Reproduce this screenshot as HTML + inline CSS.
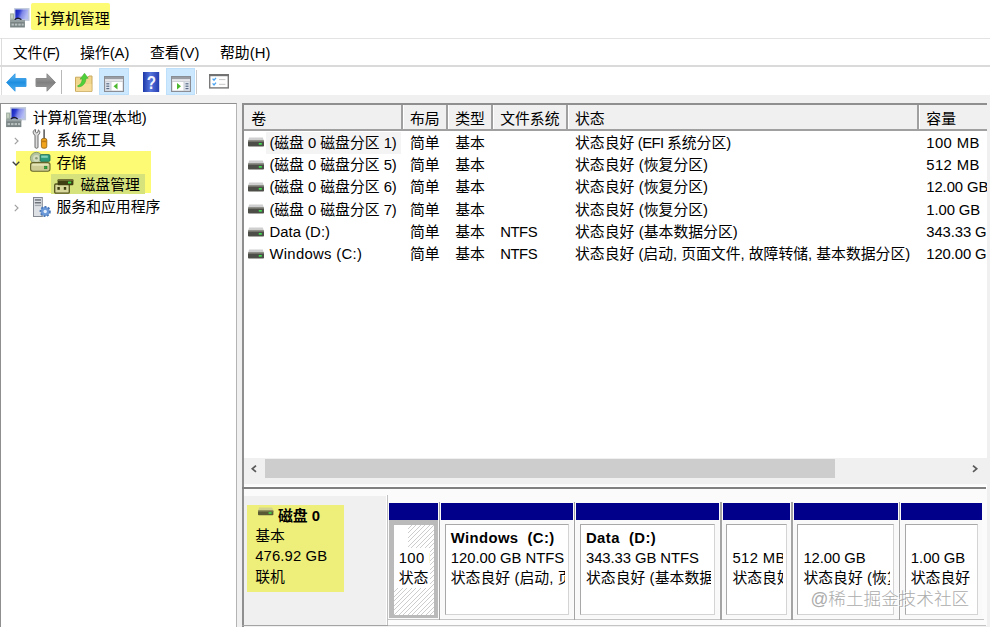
<!DOCTYPE html>
<html lang="zh-CN">
<head>
<meta charset="utf-8">
<title>计算机管理</title>
<style>
html,body{margin:0;padding:0;}
body{width:990px;height:627px;overflow:hidden;background:#fff;position:relative;
 font-family:"Liberation Sans","Noto Sans CJK SC",sans-serif;font-size:14.85px;color:#000;}
.a{position:absolute;white-space:nowrap;}
.t{position:absolute;white-space:nowrap;line-height:22px;height:22px;}
.l{font-size:14px;letter-spacing:-0.2px;}
.hl{background:#fcfb73;}
svg{position:absolute;overflow:visible;}
.clip{position:absolute;overflow:hidden;}
</style>
</head>
<body>
<div class="a hl" style="left:31px;top:3px;width:79px;height:27px;border-radius:2px;"></div>
<div class="t" id="title" style="left:35.3px;top:8.0px;">计算机管理</div>
<svg style="left:10px;top:8px" width="19.6" height="19.6" viewBox="0 0 19.6 19.6"><defs><linearGradient id="gs1" x1="0" y1="0" x2="1" y2="0.3"><stop offset="0" stop-color="#1420b8"/><stop offset="0.35" stop-color="#2c3cd0"/><stop offset="0.6" stop-color="#8088e8"/><stop offset="1" stop-color="#b4bcf4"/></linearGradient></defs><rect x="0.1" y="5.4" width="5" height="8" fill="#a2b0a4"/><rect x="1" y="6.5" width="2" height="4" fill="#c4d0c0"/><rect x="4.1" y="0.1" width="15.4" height="12.8" fill="#bec8da"/><rect x="5.4" y="1.6" width="12.6" height="9.6" fill="url(#gs1)"/><path d="M4.6 11.8 Q 8 8.6 11.4 11.8" fill="none" stroke="#1c1c24" stroke-width="1.3"/><rect x="0.1" y="12.3" width="14.8" height="7.2" fill="#7a8484"/><rect x="0.1" y="12.3" width="14.8" height="1.6" fill="#9aa4a4"/><rect x="1.5" y="15.6" width="2.4" height="2" fill="#b8c0c0"/><rect x="4.9" y="15.6" width="2.4" height="2" fill="#b8c0c0"/><rect x="8.3" y="15.6" width="2.4" height="2" fill="#b8c0c0"/><rect x="11.7" y="15.6" width="2" height="2" fill="#b8c0c0"/></svg>
<div class="a" style="left:0;top:38px;width:990px;height:1px;background:#e3e3e3;"></div>
<div class="a" style="left:0.5px;top:38px;width:1px;height:65px;background:#dcdcdc;"></div>
<div class="t" id="m1" style="left:12.7px;top:41.9px;">文件<span style="letter-spacing:-0.69px">(F)</span></div>
<div class="t" id="m2" style="left:80px;top:41.9px;">操作<span style="letter-spacing:-0.06px">(A)</span></div>
<div class="t" id="m3" style="left:150px;top:41.9px;">查看<span style="letter-spacing:-0.06px">(V)</span></div>
<div class="t" id="m4" style="left:220px;top:41.9px;">帮助<span style="letter-spacing:0.13px">(H)</span></div>
<div class="a" style="left:0;top:65.2px;width:990px;height:1.7px;background:#dadada;"></div>
<div class="a" style="left:0;top:94.7px;width:990px;height:8.3px;background:#f0f0f0;"></div>
<div class="a" style="left:99px;top:68.2px;width:29.6px;height:26.4px;background:#cce8ff;box-sizing:border-box;border:1px solid #bfe0fb;"></div>
<div class="a" style="left:166.2px;top:68.2px;width:28.8px;height:26.4px;background:#cce8ff;box-sizing:border-box;border:1px solid #bfe0fb;"></div>
<div class="a" style="left:61px;top:70px;width:1px;height:24px;background:#b8b8b8;"></div>
<div class="a" style="left:196px;top:70px;width:1px;height:24px;background:#c8c8c8;"></div>
<svg style="left:6px;top:73px" width="21" height="19" viewBox="0 0 21 19">
 <defs><linearGradient id="gb" x1="0" y1="0" x2="0" y2="1"><stop offset="0" stop-color="#5fb8f5"/><stop offset="0.5" stop-color="#1f8fe0"/><stop offset="1" stop-color="#4fb0f0"/></linearGradient></defs>
 <path d="M0.5 9.5 L9 0.8 L9 5.5 L20 5.5 L20 13.5 L9 13.5 L9 18.2 Z" fill="url(#gb)" stroke="#3d9fe6" stroke-width="1" stroke-linejoin="round"/>
</svg>
<svg style="left:35px;top:73px" width="21" height="19" viewBox="0 0 21 19">
 <defs><linearGradient id="gg" x1="0" y1="0" x2="0" y2="1"><stop offset="0" stop-color="#a8a8a8"/><stop offset="0.5" stop-color="#808080"/><stop offset="1" stop-color="#a0a0a0"/></linearGradient></defs>
 <path d="M20.5 9.5 L12 0.8 L12 5.5 L1 5.5 L1 13.5 L12 13.5 L12 18.2 Z" fill="url(#gg)" stroke="#8c8c8c" stroke-width="1" stroke-linejoin="round"/>
</svg>
<svg style="left:75px;top:72px" width="18" height="20" viewBox="0 0 18 20">
 <path d="M0.5 5.2 L13 5.2 L14 4 L17 4 L17 19.3 L0.5 19.3 Z" fill="#f0d68c" stroke="#caa95c" stroke-width="1"/>
 <rect x="1" y="12" width="15.5" height="7" fill="#f6dc98"/>
 <path d="M2.5 13.8 C5.5 13 7 10.5 7.2 6.8 L5 7.2 L9.5 1.2 L13.2 6.2 L11 6.4 C10.8 11.5 7.5 15 3 14.8 Z" fill="#4fd03a" stroke="#3aa82c" stroke-width="0.5"/>
</svg>
<svg style="left:104px;top:75.5px" width="20" height="16" viewBox="0 0 20 16"><rect x="0.5" y="0.5" width="19" height="15" fill="#c9ccd2" stroke="#8a8d94" stroke-width="1"/><rect x="1" y="1" width="18" height="2.2" fill="#9a9da4"/><rect x="1" y="3.2" width="18" height="2" fill="#e4e6ea"/><rect x="1.5" y="6" width="5" height="8.5" fill="#dfe6ef"/><rect x="2.3" y="7.2" width="3" height="1.2" fill="#5b6b86"/><rect x="2.3" y="9.6" width="3" height="1.2" fill="#5b6b86"/><rect x="2.3" y="12" width="3" height="1.2" fill="#5b6b86"/><rect x="7.5" y="6" width="11" height="8.5" fill="#fff"/><path d="M13.5 7 L13.5 13.5 L9.5 10.2 Z" fill="#4cb830"/></svg>
<svg style="left:171px;top:75.5px" width="20" height="16" viewBox="0 0 20 16"><rect x="0.5" y="0.5" width="19" height="15" fill="#c9ccd2" stroke="#8a8d94" stroke-width="1"/><rect x="1" y="1" width="18" height="2.2" fill="#9a9da4"/><rect x="1" y="3.2" width="18" height="2" fill="#e4e6ea"/><rect x="13.5" y="6" width="5" height="8.5" fill="#dfe6ef"/><rect x="14.5" y="7.2" width="3" height="1.2" fill="#5b6b86"/><rect x="14.5" y="9.6" width="3" height="1.2" fill="#5b6b86"/><rect x="14.5" y="12" width="3" height="1.2" fill="#5b6b86"/><rect x="1.5" y="6" width="11" height="8.5" fill="#fff"/><path d="M6 7 L6 13.5 L10 10.2 Z" fill="#4cb830"/></svg>
<svg style="left:142.6px;top:71.8px" width="16.2" height="20" viewBox="0 0 16.2 20">
 <defs><linearGradient id="gh" x1="0" y1="0" x2="1" y2="0"><stop offset="0" stop-color="#1c38a8"/><stop offset="0.45" stop-color="#5674dc"/><stop offset="1" stop-color="#243cb0"/></linearGradient></defs>
 <rect x="0" y="0" width="16.2" height="20" fill="url(#gh)"/>
 <text x="0" y="0" transform="translate(8.3 16.6) scale(0.82 1)" font-family="Liberation Sans, sans-serif" font-weight="bold" font-size="18.5" fill="#f4f4ff" text-anchor="middle">?</text>
</svg>
<svg style="left:208.8px;top:74.2px" width="20" height="14.6" viewBox="0 0 20 14.6">
 <rect x="0.7" y="0.7" width="18.6" height="13.2" fill="#fff" stroke="#7a7a7a" stroke-width="1.4"/>
 <rect x="0" y="0" width="20" height="2.2" fill="#727272"/>
 <path d="M3.6 4.6 L5 6.2 L7 3.8" fill="none" stroke="#4aa4f0" stroke-width="1.3"/>
 <path d="M3.6 9.4 L5 11 L7 8.6" fill="none" stroke="#4aa4f0" stroke-width="1.3"/>
 <rect x="10" y="5" width="6.4" height="1.1" fill="#cccccc"/>
 <rect x="10" y="9.8" width="6.4" height="1.1" fill="#cccccc"/>
</svg>
<div class="a" style="left:0.4px;top:103px;width:236.6px;height:524px;background:#fff;border:1px solid #8f8f8f;border-right-color:#b4b4b4;border-bottom:none;box-sizing:border-box;"></div>
<div class="a" style="left:237px;top:100px;width:5px;height:527px;background:#f0f0f0;"></div>
<div class="a hl" style="left:16px;top:151px;width:135px;height:41.6px;"></div>
<div class="a" style="left:51px;top:173.5px;width:94px;height:20.5px;background:#d6e27c;"></div>
<div class="t" id="tr0" style="left:32.8px;top:106.5px;">计算机管理<span style="letter-spacing:0.09px">(</span>本地<span style="letter-spacing:0.09px">)</span></div>
<div class="t" id="tr1" style="left:56.5px;top:129.0px;">系统工具</div>
<div class="t" id="tr2" style="left:56.5px;top:151.6px;">存储</div>
<div class="t" id="tr3" style="left:80.5px;top:173.8px;">磁盘管理</div>
<div class="t" id="tr4" style="left:56.5px;top:196.2px;">服务和应用程序</div>
<svg style="left:14.399999999999999px;top:136.6px" width="5" height="8" viewBox="0 0 5 8"><path d="M0.8 0.8 L4 4 L0.8 7.2" fill="none" stroke="#a0a0a0" stroke-width="1.2"/></svg>
<svg style="left:12.399999999999999px;top:161.20000000000002px" width="8" height="5" viewBox="0 0 8 5"><path d="M0.7 0.8 L4 4 L7.3 0.8" fill="none" stroke="#404040" stroke-width="1.3"/></svg>
<svg style="left:14.399999999999999px;top:203.8px" width="5" height="8" viewBox="0 0 5 8"><path d="M0.8 0.8 L4 4 L0.8 7.2" fill="none" stroke="#a0a0a0" stroke-width="1.2"/></svg>
<svg style="left:5.8px;top:106.8px" width="20.2" height="20.2" viewBox="0 0 19.6 19.6"><defs><linearGradient id="gs2" x1="0" y1="0" x2="1" y2="0.3"><stop offset="0" stop-color="#1420b8"/><stop offset="0.35" stop-color="#2c3cd0"/><stop offset="0.6" stop-color="#8088e8"/><stop offset="1" stop-color="#b4bcf4"/></linearGradient></defs><rect x="0.1" y="5.4" width="5" height="8" fill="#a2b0a4"/><rect x="1" y="6.5" width="2" height="4" fill="#c4d0c0"/><rect x="4.1" y="0.1" width="15.4" height="12.8" fill="#bec8da"/><rect x="5.4" y="1.6" width="12.6" height="9.6" fill="url(#gs2)"/><path d="M4.6 11.8 Q 8 8.6 11.4 11.8" fill="none" stroke="#1c1c24" stroke-width="1.3"/><rect x="0.1" y="12.3" width="14.8" height="7.2" fill="#7a8484"/><rect x="0.1" y="12.3" width="14.8" height="1.6" fill="#9aa4a4"/><rect x="1.5" y="15.6" width="2.4" height="2" fill="#b8c0c0"/><rect x="4.9" y="15.6" width="2.4" height="2" fill="#b8c0c0"/><rect x="8.3" y="15.6" width="2.4" height="2" fill="#b8c0c0"/><rect x="11.7" y="15.6" width="2" height="2" fill="#b8c0c0"/></svg>
<svg style="left:32px;top:128.6px" width="16" height="20" viewBox="0 0 16 20">
 <path d="M1.2 3.4 C1 1.8 2.2 0.7 3.6 0.6 L3.4 3 L4.6 3.8 L6 3 L6.4 0.9 C7.8 1.6 8.2 3.4 7.4 4.8 C7 5.6 6.4 6 6 6.2 L6 18.2 C6 19.6 3 19.6 3 18.2 L3 6.2 C2 5.8 1.3 4.8 1.2 3.4 Z" fill="#dcdcdc" stroke="#5c5c5c" stroke-width="0.9"/>
 <rect x="11.4" y="0.4" width="1.4" height="9.4" fill="#4a4a4a"/>
 <rect x="9.4" y="9.4" width="5.4" height="9.8" rx="1.8" fill="#f2a41c" stroke="#8c5c0c" stroke-width="0.8"/>
 <rect x="9.2" y="11.6" width="5.8" height="1.6" fill="#c07c10"/>
</svg>
<svg style="left:30px;top:152px" width="21" height="20" viewBox="0 0 21 20">
 <circle cx="6.4" cy="6.3" r="6" fill="#b4c49c" stroke="#7c8c64" stroke-width="0.8"/>
 <circle cx="6.4" cy="6.3" r="3.4" fill="#d4dcc0"/>
 <circle cx="6.4" cy="6.3" r="1.3" fill="#8c9c78"/>
 <rect x="10.2" y="2.6" width="9.8" height="6.8" rx="1.2" fill="#2c9c7c" stroke="#1c6c54" stroke-width="0.8"/>
 <rect x="11.2" y="3.6" width="6.6" height="2.2" fill="#84d0b8"/>
 <rect x="0.6" y="10.6" width="19.4" height="8.6" rx="2.2" fill="#cccc94" stroke="#66662c" stroke-width="1.1"/>
 <rect x="2" y="11.8" width="16.6" height="2" rx="1" fill="#e4e4b8"/>
 <rect x="14.6" y="14.2" width="2.4" height="2.6" fill="#2cb03c" stroke="#1c6c24" stroke-width="0.5"/>
</svg>
<svg style="left:54px;top:179px" width="20" height="15" viewBox="0 0 20 15">
 <rect x="0.7" y="5" width="14.6" height="9.2" rx="1.2" fill="#d8d89c" stroke="#54541c" stroke-width="1.3"/>
 <rect x="3.4" y="8" width="2.4" height="2.8" fill="#3c3c10"/>
 <rect x="9.8" y="8" width="2.4" height="2.8" fill="#3c3c10"/>
 <rect x="3.6" y="0.2" width="15.8" height="6" rx="1" fill="#3e3e12"/>
 <rect x="3.6" y="0.2" width="15.8" height="1.6" rx="0.8" fill="#78783c"/>
 <rect x="14" y="2.6" width="3.2" height="1.9" fill="#44d84c"/>
</svg>
<svg style="left:32.5px;top:197px" width="19" height="20" viewBox="0 0 19 20">
 <rect x="0.5" y="0.5" width="8.8" height="19" fill="#dde0e4" stroke="#858a92" stroke-width="1"/>
 <rect x="1.8" y="2.2" width="6.2" height="1.5" fill="#6f747c"/>
 <rect x="1.8" y="5" width="6.2" height="1.5" fill="#6f747c"/>
 <rect x="1.8" y="7.8" width="6.2" height="1.3" fill="#a4a8b0"/>
 <circle cx="12.2" cy="14.5" r="4.6" fill="#6a98d8" stroke="#4a78b8" stroke-width="2" stroke-dasharray="1.9 1.5"/>
 <circle cx="12.2" cy="14.5" r="3.8" fill="#6a98d8"/>
 <circle cx="12.2" cy="14.5" r="1.7" fill="#e4eefa"/>
</svg>
<div class="a" style="left:241.6px;top:103.2px;width:745.6px;height:524px;background:#fff;border:2px solid #8f8f8f;border-right:none;border-bottom:none;box-sizing:border-box;"></div>
<div class="a" style="left:987.1px;top:100px;width:3px;height:527px;background:#f0f0f0;"></div>
<div class="a" style="left:243.6px;top:105.2px;width:743.5px;height:24.2px;background:#f0f0f0;border-bottom:2px solid #a0a0a0;"></div>
<div class="a" style="left:400.9px;top:105.2px;width:2px;height:25px;background:#a0a0a0;"></div>
<div class="a" style="left:402.9px;top:105.2px;width:1px;height:24px;background:#fff;"></div>
<div class="a" style="left:445.8px;top:105.2px;width:2px;height:25px;background:#a0a0a0;"></div>
<div class="a" style="left:447.8px;top:105.2px;width:1px;height:24px;background:#fff;"></div>
<div class="a" style="left:490.9px;top:105.2px;width:2px;height:25px;background:#a0a0a0;"></div>
<div class="a" style="left:492.9px;top:105.2px;width:1px;height:24px;background:#fff;"></div>
<div class="a" style="left:565.8px;top:105.2px;width:2px;height:25px;background:#a0a0a0;"></div>
<div class="a" style="left:567.8px;top:105.2px;width:1px;height:24px;background:#fff;"></div>
<div class="a" style="left:917.1px;top:105.2px;width:2px;height:25px;background:#a0a0a0;"></div>
<div class="a" style="left:919.1px;top:105.2px;width:1px;height:24px;background:#fff;"></div>
<div class="t" id="h0" style="left:251.2px;top:108.0px;">卷</div>
<div class="t" id="h1" style="left:410px;top:108.0px;">布局</div>
<div class="t" id="h2" style="left:455.2px;top:108.0px;">类型</div>
<div class="t" id="h3" style="left:500.2px;top:108.0px;">文件系统</div>
<div class="t" id="h4" style="left:575px;top:108.0px;">状态</div>
<div class="t" id="h5" style="left:926.3px;top:108.0px;">容量</div>
<div class="a" style="left:266px;top:132px;width:135px;height:22px;background:#f4f4f4;"></div>
<div class="clip" style="left:244px;top:131px;width:743.2px;height:327px;">
<svg style="left:4.300000000000011px;top:6.4px" width="16" height="9.6" viewBox="0 0 16 9.6"><path d="M1.2 0.6 L14.8 0.6 L16 3.8 L0 3.8 Z" fill="#cfcfcf"/><rect x="0" y="3.4" width="16" height="6.2" rx="0.8" fill="#4e4e48"/><rect x="0" y="3.4" width="16" height="1.2" fill="#8c8c84"/><rect x="10.8" y="6" width="3" height="1.7" fill="#3fe04f"/></svg>
<div class="t" id="v0" style="left:25.399999999999977px;top:0.6px;"><span style="letter-spacing:-0.08px">(</span>磁盘<span style="letter-spacing:-0.08px"> 0 </span>磁盘分区<span style="letter-spacing:-0.08px"> 1)</span></div>
<div class="t" id="l0" style="left:166px;top:0.6px;">简单</div>
<div class="t" id="ty0" style="left:211.2px;top:0.6px;">基本</div>
<div class="t" id="st0" style="left:331px;top:0.6px;">状态良好<span style="letter-spacing:-0.63px"> (EFI </span>系统分区<span style="letter-spacing:-0.63px">)</span></div>
<div class="t" id="c0" style="left:682.3px;top:0.6px;"><span style="letter-spacing:0.37px">100 MB</span></div>
<svg style="left:4.300000000000011px;top:28.7px" width="16" height="9.6" viewBox="0 0 16 9.6"><path d="M1.2 0.6 L14.8 0.6 L16 3.8 L0 3.8 Z" fill="#cfcfcf"/><rect x="0" y="3.4" width="16" height="6.2" rx="0.8" fill="#4e4e48"/><rect x="0" y="3.4" width="16" height="1.2" fill="#8c8c84"/><rect x="10.8" y="6" width="3" height="1.7" fill="#3fe04f"/></svg>
<div class="t" id="v1" style="left:25.399999999999977px;top:22.9px;"><span style="letter-spacing:-0.08px">(</span>磁盘<span style="letter-spacing:-0.08px"> 0 </span>磁盘分区<span style="letter-spacing:-0.08px"> 5)</span></div>
<div class="t" id="l1" style="left:166px;top:22.9px;">简单</div>
<div class="t" id="ty1" style="left:211.2px;top:22.9px;">基本</div>
<div class="t" id="st1" style="left:331px;top:22.9px;">状态良好<span style="letter-spacing:0.14px"> (</span>恢复分区<span style="letter-spacing:0.14px">)</span></div>
<div class="t" id="c1" style="left:682.3px;top:22.9px;"><span style="letter-spacing:0.37px">512 MB</span></div>
<svg style="left:4.300000000000011px;top:51.0px" width="16" height="9.6" viewBox="0 0 16 9.6"><path d="M1.2 0.6 L14.8 0.6 L16 3.8 L0 3.8 Z" fill="#cfcfcf"/><rect x="0" y="3.4" width="16" height="6.2" rx="0.8" fill="#4e4e48"/><rect x="0" y="3.4" width="16" height="1.2" fill="#8c8c84"/><rect x="10.8" y="6" width="3" height="1.7" fill="#3fe04f"/></svg>
<div class="t" id="v2" style="left:25.399999999999977px;top:45.2px;"><span style="letter-spacing:-0.08px">(</span>磁盘<span style="letter-spacing:-0.08px"> 0 </span>磁盘分区<span style="letter-spacing:-0.08px"> 6)</span></div>
<div class="t" id="l2" style="left:166px;top:45.2px;">简单</div>
<div class="t" id="ty2" style="left:211.2px;top:45.2px;">基本</div>
<div class="t" id="st2" style="left:331px;top:45.2px;">状态良好<span style="letter-spacing:0.14px"> (</span>恢复分区<span style="letter-spacing:0.14px">)</span></div>
<div class="t" id="c2" style="left:682.3px;top:45.2px;"><span style="letter-spacing:-0.10px">12.00 GB</span></div>
<svg style="left:4.300000000000011px;top:73.3px" width="16" height="9.6" viewBox="0 0 16 9.6"><path d="M1.2 0.6 L14.8 0.6 L16 3.8 L0 3.8 Z" fill="#cfcfcf"/><rect x="0" y="3.4" width="16" height="6.2" rx="0.8" fill="#4e4e48"/><rect x="0" y="3.4" width="16" height="1.2" fill="#8c8c84"/><rect x="10.8" y="6" width="3" height="1.7" fill="#3fe04f"/></svg>
<div class="t" id="v3" style="left:25.399999999999977px;top:67.5px;"><span style="letter-spacing:-0.08px">(</span>磁盘<span style="letter-spacing:-0.08px"> 0 </span>磁盘分区<span style="letter-spacing:-0.08px"> 7)</span></div>
<div class="t" id="l3" style="left:166px;top:67.5px;">简单</div>
<div class="t" id="ty3" style="left:211.2px;top:67.5px;">基本</div>
<div class="t" id="st3" style="left:331px;top:67.5px;">状态良好<span style="letter-spacing:0.14px"> (</span>恢复分区<span style="letter-spacing:0.14px">)</span></div>
<div class="t" id="c3" style="left:682.3px;top:67.5px;"><span style="letter-spacing:-0.10px">1.00 GB</span></div>
<svg style="left:4.300000000000011px;top:95.9px" width="16" height="9.6" viewBox="0 0 16 9.6"><path d="M1.2 0.6 L14.8 0.6 L16 3.8 L0 3.8 Z" fill="#cfcfcf"/><rect x="0" y="3.4" width="16" height="6.2" rx="0.8" fill="#4e4e48"/><rect x="0" y="3.4" width="16" height="1.2" fill="#8c8c84"/><rect x="10.8" y="6" width="3" height="1.7" fill="#3fe04f"/></svg>
<div class="t" id="v4" style="left:25.399999999999977px;top:90.1px;"><span style="letter-spacing:0.05px">Data (D:)</span></div>
<div class="t" id="l4" style="left:166px;top:90.1px;">简单</div>
<div class="t" id="ty4" style="left:211.2px;top:90.1px;">基本</div>
<div class="t" id="fs4" style="left:256.2px;top:90.1px;"><span style="letter-spacing:-0.44px">NTFS</span></div>
<div class="t" id="st4" style="left:331px;top:90.1px;">状态良好<span style="letter-spacing:0.14px"> (</span>基本数据分区<span style="letter-spacing:0.14px">)</span></div>
<div class="t" id="c4" style="left:682.3px;top:90.1px;"><span style="letter-spacing:-0.10px">343.33 GB</span></div>
<svg style="left:4.300000000000011px;top:118.2px" width="16" height="9.6" viewBox="0 0 16 9.6"><path d="M1.2 0.6 L14.8 0.6 L16 3.8 L0 3.8 Z" fill="#cfcfcf"/><rect x="0" y="3.4" width="16" height="6.2" rx="0.8" fill="#4e4e48"/><rect x="0" y="3.4" width="16" height="1.2" fill="#8c8c84"/><rect x="10.8" y="6" width="3" height="1.7" fill="#3fe04f"/></svg>
<div class="t" id="v5" style="left:25.399999999999977px;top:112.4px;"><span style="letter-spacing:0.32px">Windows (C:)</span></div>
<div class="t" id="l5" style="left:166px;top:112.4px;">简单</div>
<div class="t" id="ty5" style="left:211.2px;top:112.4px;">基本</div>
<div class="t" id="fs5" style="left:256.2px;top:112.4px;"><span style="letter-spacing:-0.44px">NTFS</span></div>
<div class="t" id="st5" style="left:331px;top:112.4px;">状态良好<span style="letter-spacing:-0.05px"> (</span>启动<span style="letter-spacing:-0.05px">, </span>页面文件<span style="letter-spacing:-0.05px">, </span>故障转储<span style="letter-spacing:-0.05px">, </span>基本数据分区<span style="letter-spacing:-0.05px">)</span></div>
<div class="t" id="c5" style="left:682.3px;top:112.4px;"><span style="letter-spacing:-0.10px">120.00 GB</span></div>
</div>
<div class="a" style="left:243.6px;top:458.3px;width:743.5px;height:21px;background:#f0f0f0;"></div>
<div class="a" style="left:265.2px;top:458.6px;width:569.8px;height:19.8px;background:#cdcdcd;"></div>
<svg style="left:250.8px;top:464.6px" width="6" height="7.6" viewBox="0 0 6 7.6"><path d="M5 0.7 L1.3 3.8 L5 6.9" fill="none" stroke="#5a5a5a" stroke-width="1.7"/></svg>
<svg style="left:971.6px;top:464.6px" width="6" height="7.6" viewBox="0 0 6 7.6"><path d="M1 0.7 L4.7 3.8 L1 6.9" fill="none" stroke="#5a5a5a" stroke-width="1.7"/></svg>
<div class="a" style="left:243.6px;top:479px;width:743.5px;height:5px;background:#f0f0f0;"></div>
<div class="a" style="left:243.6px;top:484px;width:743.5px;height:2px;background:#fafafa;"></div>
<div class="a" style="left:241.6px;top:486.9px;width:744.7px;height:2.2px;background:#808080;"></div>
<div class="a" style="left:243.6px;top:489px;width:743.5px;height:138px;background:#fbfbfb;"></div>
<div class="a" style="left:243.6px;top:496px;width:142px;height:131px;background:#f0f0f0;"></div>
<div class="a" style="left:385.6px;top:495px;width:1.2px;height:132px;background:#fff;"></div>
<div class="a" style="left:386.8px;top:495px;width:1px;height:132px;background:#c0c0c0;"></div>
<div class="a" style="left:247px;top:505px;width:97.3px;height:87px;background:#eeef7a;"></div>
<svg style="left:258.4px;top:507.4px" width="15.4" height="8.2" viewBox="0 0 15.4 8.2"><path d="M1.2 0.4 L14.2 0.4 L15.4 3.6 L0 3.6 Z" fill="#d2d290"/><rect x="0" y="3.4" width="15.4" height="4.8" rx="0.8" fill="#5a5a34"/><rect x="0" y="3.4" width="15.4" height="1.1" fill="#8c8c5c"/><rect x="10.6" y="5.2" width="3" height="1.6" fill="#3fe04f"/></svg>
<div class="t" id="d0" style="left:278px;top:505.0px;font-weight:bold;">磁盘<span style="letter-spacing:-0.04px"> 0</span></div>
<div class="t" id="d1" style="left:255.2px;top:525.2px;">基本</div>
<div class="t" id="d2" style="left:255.2px;top:545.0px;"><span style="letter-spacing:0.11px">476.92 GB</span></div>
<div class="t" id="d3" style="left:255.2px;top:565.6px;">联机</div>
<div class="a" style="left:388px;top:619px;width:596px;height:1px;background:#c4c4c4;"></div>
<div class="a" style="left:387.8px;top:620px;width:598px;height:4.6px;background:#fcfcfc;"></div>
<div class="a" style="left:241.6px;top:624.8px;width:146px;height:1.6px;background:#a4a4a4;"></div>
<div class="a" style="left:387.6px;top:624.6px;width:598.4px;height:1.6px;background:#c4c4c4;"></div>
<div class="a" style="left:243.6px;top:626.3px;width:743.5px;height:1px;background:#f0f0f0;"></div>
<div class="a" style="left:388.8px;top:503px;width:49.0px;height:17.4px;background:#00008b;"></div>
<div class="clip" style="left:388.8px;top:520.4px;width:49.0px;height:98px;background:#bababa;"><div class="a" style="left:5px;top:4.2px;width:40.6px;height:90.2px;background:repeating-linear-gradient(135deg,#fff 0,#fff 2.5px,#cdcdcd 2.5px,#cdcdcd 3.2px);"></div>
<div class="a" style="left:5px;top:4.2px;width:14px;height:24px;background:#fff;"></div><div class="clip" style="left:5px;top:28px;width:36.6px;height:40px;background:#fff;"><div class="t" id="p0a" style="left:4.9px;top:-1.4px;"><span style="letter-spacing:0.37px">100 MB</span></div>
<div class="t" id="p0b" style="left:4.9px;top:18.8px;">状态良好</div>
</div></div>
<div class="a" style="left:441px;top:503px;width:131.5px;height:17.4px;background:#00008b;"></div>
<div class="a" style="left:438.8px;top:502px;width:1.3px;height:117.5px;background:#a4a4a4;"></div>
<div class="clip" style="left:441px;top:520.4px;width:131.5px;height:98px;background:#f9f9f9;"><div class="clip" style="left:3.6px;top:3.4px;width:124.1px;height:91.4px;background:#fff;border:1px solid #a8a8a8;border-right-color:#d4d4d4;border-bottom-color:#d4d4d4;box-sizing:border-box;">
<div class="clip" style="left:0;top:0;width:119.2px;height:90px;"><div class="t" id="p1n" style="left:5.2px;top:2.2px;font-weight:bold;"><span style="letter-spacing:0.38px">Windows&nbsp; (C:)</span></div>
<div class="t" id="p1a" style="left:5.2px;top:22.4px;"><span style="letter-spacing:-0.03px">120.00 GB NTFS</span></div>
<div class="t" id="p1b" style="left:5.2px;top:42.4px;">状态良好<span style="letter-spacing:0.14px"> (</span>启动<span style="letter-spacing:0.14px">, </span>页面</div>
</div></div></div>
<div class="a" style="left:576.2px;top:503px;width:143.0px;height:17.4px;background:#00008b;"></div>
<div class="a" style="left:574.0px;top:502px;width:1.3px;height:117.5px;background:#a4a4a4;"></div>
<div class="clip" style="left:576.2px;top:520.4px;width:143.0px;height:98px;background:#f9f9f9;"><div class="clip" style="left:3.6px;top:3.4px;width:135.6px;height:91.4px;background:#fff;border:1px solid #a8a8a8;border-right-color:#d4d4d4;border-bottom-color:#d4d4d4;box-sizing:border-box;">
<div class="clip" style="left:0;top:0;width:130.7px;height:90px;"><div class="t" id="p2n" style="left:5.2px;top:2.2px;font-weight:bold;"><span style="letter-spacing:0.43px">Data&nbsp; (D:)</span></div>
<div class="t" id="p2a" style="left:5.2px;top:22.4px;"><span style="letter-spacing:-0.08px">343.33 GB NTFS</span></div>
<div class="t" id="p2b" style="left:5.2px;top:42.4px;">状态良好<span style="letter-spacing:0.14px"> (</span>基本数据分</div>
</div></div></div>
<div class="a" style="left:722.6px;top:503px;width:67.8px;height:17.4px;background:#00008b;"></div>
<div class="a" style="left:720.4px;top:502px;width:1.3px;height:117.5px;background:#a4a4a4;"></div>
<div class="clip" style="left:722.6px;top:520.4px;width:67.8px;height:98px;background:#f9f9f9;"><div class="clip" style="left:3.6px;top:3.4px;width:60.4px;height:91.4px;background:#fff;border:1px solid #a8a8a8;border-right-color:#d4d4d4;border-bottom-color:#d4d4d4;box-sizing:border-box;">
<div class="clip" style="left:0;top:0;width:55.5px;height:90px;"><div class="t" id="p3a" style="left:5.2px;top:22.4px;"><span style="letter-spacing:0.37px">512 MB</span></div>
<div class="t" id="p3b" style="left:5.2px;top:42.4px;">状态良好</div>
</div></div></div>
<div class="a" style="left:793.6px;top:503px;width:104.4px;height:17.4px;background:#00008b;"></div>
<div class="a" style="left:791.4px;top:502px;width:1.3px;height:117.5px;background:#a4a4a4;"></div>
<div class="clip" style="left:793.6px;top:520.4px;width:104.4px;height:98px;background:#f9f9f9;"><div class="clip" style="left:3.6px;top:3.4px;width:97.0px;height:91.4px;background:#fff;border:1px solid #a8a8a8;border-right-color:#d4d4d4;border-bottom-color:#d4d4d4;box-sizing:border-box;">
<div class="clip" style="left:0;top:0;width:92.1px;height:90px;"><div class="t" id="p4a" style="left:5.2px;top:22.4px;"><span style="letter-spacing:-0.05px">12.00 GB</span></div>
<div class="t" id="p4b" style="left:5.2px;top:42.4px;">状态良好<span style="letter-spacing:0.14px"> (</span>恢复分</div>
</div></div></div>
<div class="a" style="left:901px;top:503px;width:80.5px;height:17.4px;background:#00008b;"></div>
<div class="a" style="left:898.8px;top:502px;width:1.3px;height:117.5px;background:#a4a4a4;"></div>
<div class="clip" style="left:901px;top:520.4px;width:80.5px;height:98px;background:#f9f9f9;"><div class="clip" style="left:3.6px;top:3.4px;width:73.1px;height:91.4px;background:#fff;border:1px solid #a8a8a8;border-right-color:#d4d4d4;border-bottom-color:#d4d4d4;box-sizing:border-box;">
<div class="clip" style="left:0;top:0;width:68.2px;height:90px;"><div class="t" id="p5a" style="left:5.2px;top:22.4px;"><span style="letter-spacing:-0.01px">1.00 GB</span></div>
<div class="t" id="p5b" style="left:5.2px;top:42.4px;">状态良好</div>
</div></div></div>
<div class="t" id="wm" style="left:810.5px;top:587.5px;font-size:17.6px;font-weight:300;color:#a8a8a8;opacity:0.95;text-shadow:1px 1px 0 #fff,-1px -1px 0 rgba(255,255,255,.8);">@稀土掘金技术社区</div>
</body>
</html>
